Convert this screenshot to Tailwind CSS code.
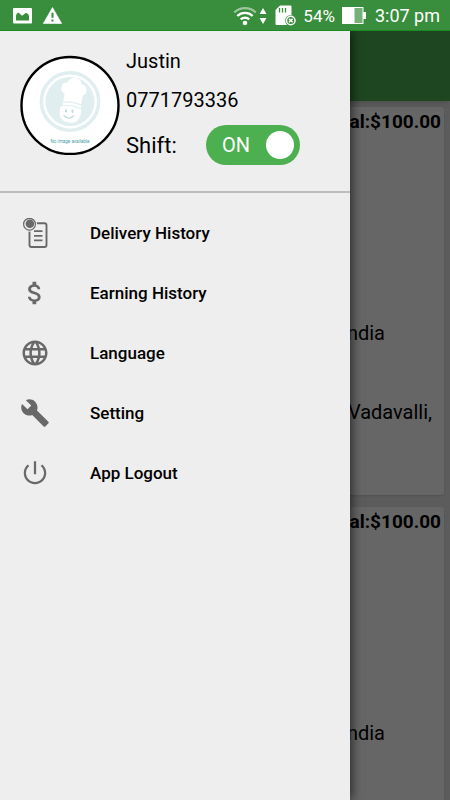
<!DOCTYPE html>
<html lang="en">
<head>
<meta charset="utf-8">
<meta name="viewport" content="width=device-width, initial-scale=1">
<title>Driver menu</title>
<script src="https://cdn.jsdelivr.net/npm/@tailwindcss/browser@4"></script>
</head>
<body class="font-[Roboto,'Liberation_Sans',sans-serif] text-black">
<div class="flex h-screen flex-col overflow-hidden">

  <!-- Status bar -->
  <div class="flex h-[31px] shrink-0 items-center border-b border-[#1c8a22] bg-[#388e3c] pt-px pr-[10px] pl-[13px] text-white">
    <svg class="h-4 w-[19px]" viewBox="0 0 19 16" aria-hidden="true"><rect width="19" height="15.5" rx="1" fill="#fff"/><path d="M3 12.500V7.500Q3.500 5 5.500 4.600L9 7.800l1.500-1 2.500-2Q15.500 5.500 16 8v4.500z" fill="#388e3c"/></svg>
    <svg class="ml-[11px] h-[17px] w-[19px]" viewBox="0 0 19 17" aria-hidden="true"><path d="M9.500 0.500 18.700 16.500H.3z" fill="#fff" stroke="#fff" stroke-linejoin="round" stroke-width=".6"/><path d="M8.500 5.800h2v5h-2zM8.500 12.500h2v2h-2z" fill="#388e3c"/></svg>
    <div class="ml-auto flex items-center">
      <svg class="h-5 w-6" viewBox="0 0 24 20" fill="none" aria-hidden="true"><path d="M1.200 6.500a15.500 15.500 0 0 1 21.600 0" stroke="#fff" stroke-opacity=".5" stroke-width="2.200"/><path d="M4.300 10a11 11 0 0 1 15.400 0M7.700 13.400a6.300 6.300 0 0 1 8.600 0" stroke="#fff" stroke-width="2.400"/><circle cx="12" cy="17" r="2.300" fill="#fff"/></svg>
      <svg class="ml-[2px] h-4 w-2" viewBox="0 0 8 16" fill="#fff" aria-hidden="true"><path d="M4 0l3.500 6H.5zM4 16l3.500-6H.5z"/></svg>
      <svg class="ml-[8px] h-[21px] w-[21px]" viewBox="0 0 21 21" aria-hidden="true"><path d="M5 .5h10.500a1 1 0 0 1 1 1V20H1.500a1 1 0 0 1-1-1V5z" fill="#fff"/><path d="M4.500 3v4.500M7.500 3v4.500M10.500 3v4.500" stroke="#388e3c" stroke-width="1.300"/><circle cx="15.800" cy="15.500" r="5.600" fill="#388e3c"/><circle cx="15.800" cy="15.500" r="4.900" fill="#fff"/><circle cx="15.800" cy="15.500" r="3.500" fill="#388e3c"/><path d="m14 13.700 3.600 3.600m0-3.600L14 17.300" stroke="#fff" stroke-width="1.600"/></svg>
      <span class="ml-[7px] text-[17px] leading-5">54%</span>
      <svg class="ml-[7px] h-[17px] w-6" viewBox="0 0 24 17" aria-hidden="true"><path d="M0 0h21.500v5H24v7h-2.500v5H0z" fill="#fff"/><path d="M12.500 1h8v15h-8z" fill="#74b077"/></svg>
      <span class="ml-[9px] text-[18px] leading-5">3:07 pm</span>
    </div>
  </div>

  <div class="relative min-h-0 flex-1 overflow-hidden bg-[#e6e6e9]">
    <!-- Deliveries behind the drawer -->
    <div class="h-[70px] bg-[#4caf50] shadow-md"></div>
    <main class="flex flex-col gap-3 px-[6px] pt-[6px] text-right text-[20px] leading-6">
      <article class="h-[388px] rounded-[3px] bg-white pt-[3px] pr-[3px] shadow">
        <p class="text-[19px] font-bold">Total:$100.00</p>
        <p class="mt-[187px] pr-14">India</p>
        <p class="mt-[55px] pr-[9px]">Vadavalli,</p>
      </article>
      <article class="h-[388px] rounded-[3px] bg-white pt-[3px] pr-[3px] shadow">
        <p class="text-[19px] font-bold">Total:$100.00</p>
        <p class="mt-[187px] pr-14">India</p>
      </article>
    </main>

    <div class="absolute inset-0 bg-black/60"></div>

    <!-- Drawer -->
    <aside class="absolute inset-y-0 left-0 w-[350px] max-w-full bg-[#eeeeee] shadow-[2px_0_10px_rgba(0,0,0,0.6)]">
      <header class="flex gap-[6px] border-b-2 border-[#bdbdbd] pt-[10px] pb-[26px] pl-5">
        <svg class="mt-[14px] size-[100px] shrink-0" viewBox="0 0 100 100" role="img" aria-label="Profile picture">
          <circle cx="50" cy="50.500" r="48.500" fill="#fff" stroke="#000" stroke-width="2.400"/>
          <circle cx="50" cy="46.500" r="28.700" fill="none" stroke="#e0eeef" stroke-width="3.400"/>
          <circle cx="50" cy="46.500" r="24.500" fill="#e0eeef"/>
          <g transform="rotate(9 50 46)" fill="#fff">
            <path d="M43.500 47.500V39.500a5.800 5.800 0 0 1 1-11.300 7.600 7.600 0 0 1 14.500-.6 6 6 0 0 1 2.500 11.300v8.600q-9-2.300-18 0z"/>
            <path d="M43.200 48.700q9.300-2.300 18.600 0v2.400q-9.300-2.200-18.600 0z"/>
            <path d="M41.700 52.300q10-2.400 20.500 0 2.200 12.500-7 15-3 .8-6.500 0-9-3-7-15z"/>
          </g>
          <g stroke="#c3dcde" fill="none" stroke-linecap="round"><path d="M44 60.500q4.500 5 9.500.5" stroke-width="1.200"/><path d="M46 55v1.500M52.500 55.500V57" stroke-width="2"/></g>
          <text x="50" y="88" text-anchor="middle" font-size="4.600" font-family="Roboto, sans-serif" fill="#4aa3a8">No image available</text>
        </svg>
        <div class="flex flex-col text-[20px]">
          <p class="h-10 leading-10">Justin</p>
          <p class="h-10 leading-[38px]">0771793336</p>
          <div class="mt-1 flex h-10 items-center">
            <label for="shift" class="w-20 text-[22px]">Shift:</label>
            <span class="relative flex h-10 w-[94px]">
              <input id="shift" type="checkbox" role="switch" checked class="peer size-full appearance-none rounded-full bg-gray-400 checked:bg-[#4caf50]">
              <span class="pointer-events-none absolute inset-0 flex items-center justify-between pr-[6px] pl-4 text-white">ON<span class="size-7 rounded-full bg-white"></span></span>
            </span>
          </div>
        </div>
      </header>

      <nav class="flex flex-col pt-[10px] text-[17px] font-medium [&_span]:pt-[2px] [&_svg]:size-[30px] [&_svg]:text-[#686868]">
        <a href="#delivery" class="flex h-[60px] items-center gap-10 px-5">
          <svg viewBox="0 0 30 30" fill="none" stroke="currentColor" aria-hidden="true"><rect x="9.500" y="5.300" width="17" height="23.700" rx="2" stroke-width="1.900"/><path d="M14 13.200h8.500M14 17.800h8.500M14 22.400h8.500" stroke-width="1.700"/><circle cx="9.500" cy="6.200" r="7" fill="#eee" stroke="#eee"/><circle cx="9.500" cy="6.200" r="5.900" stroke-width="1.200"/><circle cx="9.900" cy="5.700" r="4.300" fill="currentColor" stroke="none"/></svg>
          <span>Delivery History</span>
        </a>
        <a href="#earning" class="flex h-[60px] items-center gap-10 px-5">
          <svg viewBox="0 0 24 24" fill="currentColor" aria-hidden="true"><path d="M11.800 10.900c-2.270-.59-3-1.200-3-2.150 0-1.090 1.010-1.850 2.700-1.850 1.780 0 2.440.85 2.500 2.100h2.210c-.07-1.720-1.120-3.300-3.210-3.810V3h-3v2.160c-1.940.42-3.500 1.680-3.500 3.610 0 2.310 1.910 3.460 4.700 4.130 2.500.6 3 1.480 3 2.410 0 .69-.49 1.790-2.700 1.790-2.060 0-2.870-.92-2.980-2.100h-2.200c.12 2.190 1.760 3.420 3.680 3.830V21h3v-2.150c1.950-.37 3.500-1.500 3.500-3.550 0-2.840-2.430-3.810-4.700-4.400z"/></svg>
          <span>Earning History</span>
        </a>
        <a href="#language" class="flex h-[60px] items-center gap-10 px-5">
          <svg viewBox="0 0 24 24" fill="currentColor" aria-hidden="true"><path d="M11.990 2C6.470 2 2 6.480 2 12s4.470 10 9.990 10C17.520 22 22 17.520 22 12S17.520 2 11.990 2zm6.930 6h-2.950c-.32-1.250-.78-2.450-1.380-3.560 1.840.63 3.370 1.910 4.330 3.560zM12 4.040c.83 1.200 1.480 2.530 1.910 3.960h-3.820c.43-1.430 1.080-2.760 1.910-3.960zM4.260 14C4.100 13.360 4 12.690 4 12s.1-1.360.26-2h3.380c-.08.66-.14 1.320-.14 2 0 .68.06 1.340.14 2H4.260zm.82 2h2.950c.32 1.250.78 2.450 1.380 3.560-1.840-.63-3.370-1.900-4.330-3.560zm2.950-8H5.080c.96-1.660 2.490-2.930 4.330-3.560C8.810 5.550 8.350 6.750 8.030 8zM12 19.960c-.83-1.200-1.480-2.530-1.910-3.960h3.820c-.43 1.430-1.080 2.760-1.910 3.960zM14.340 14H9.660c-.09-.66-.16-1.320-.16-2 0-.68.07-1.350.16-2h4.680c.09.65.16 1.320.16 2 0 .68-.07 1.340-.16 2zm.25 5.560c.6-1.110 1.060-2.310 1.380-3.560h2.950c-.96 1.650-2.490 2.930-4.330 3.560zM16.360 14c.08-.66.14-1.320.14-2 0-.68-.06-1.340-.14-2h3.380c.16.64.26 1.310.26 2s-.1 1.360-.26 2h-3.380z"/></svg>
          <span>Language</span>
        </a>
        <a href="#setting" class="flex h-[60px] items-center gap-10 px-5">
          <svg viewBox="0 0 24 24" fill="currentColor" aria-hidden="true"><path d="M22.700 19l-9.100-9.100c.9-2.300.4-5-1.500-6.900-2-2-5-2.400-7.400-1.300L9 6 6 9 1.600 4.700C.4 7.100.9 10.100 2.900 12.100c1.900 1.900 4.600 2.400 6.900 1.500l9.100 9.100c.4.4 1 .4 1.400 0l2.300-2.300c.5-.4.5-1.100.1-1.400z"/></svg>
          <span>Setting</span>
        </a>
        <a href="#logout" class="flex h-[60px] items-center gap-10 px-5">
          <svg viewBox="0 0 24 24" fill="currentColor" aria-hidden="true"><path d="M12.900 2.500h-1.800v10.500h1.800zm4.930 2.670l-1.270 1.270C18.180 7.720 19.200 9.750 19.200 12c0 3.970-3.230 7.200-7.200 7.200S4.800 15.970 4.800 12c0-2.260 1.020-4.280 2.630-5.590L6.170 5.170C4.230 6.820 3 9.260 3 12c0 4.970 4.030 9 9 9s9-4.030 9-9c0-2.740-1.230-5.180-3.170-6.830z"/></svg>
          <span>App Logout</span>
        </a>
      </nav>
    </aside>
  </div>
</div>
</body>
</html>
